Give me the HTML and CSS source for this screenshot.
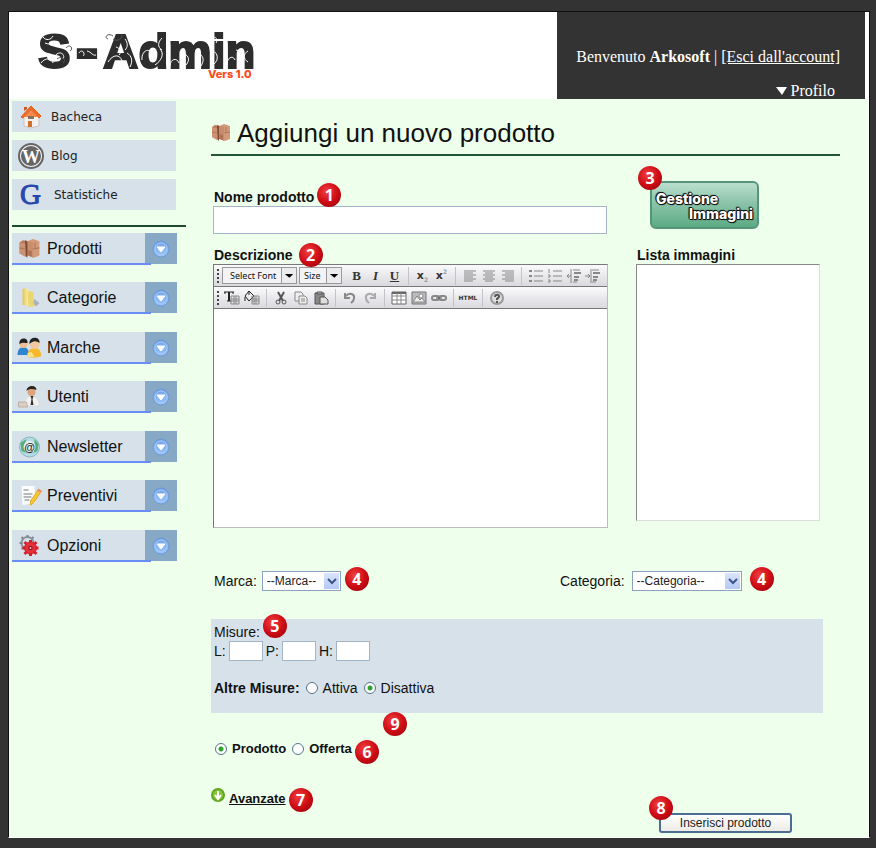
FILE: index.html
```html
<!DOCTYPE html>
<html lang="it">
<head>
  <meta charset="UTF-8" />
  <meta name="viewport" content="width=device-width, initial-scale=1.0" />
  <title>S-Admin - Aggiungi un nuovo prodotto</title>
  <link rel="stylesheet" href="styles.css">
</head>
<body>

  <svg class="sprite" aria-hidden="true">
    <defs>
      <linearGradient id="blue-ball" x1="0" y1="0" x2="0" y2="1">
        <stop offset="0" stop-color="#6f9fe4" />
        <stop offset="1" stop-color="#9cc6fb" />
      </linearGradient>
      <linearGradient id="folder-fill" x1="0" y1="0" x2="1" y2="0">
        <stop offset="0" stop-color="#e3c659" />
        <stop offset="1" stop-color="#fbf0a8" />
      </linearGradient>
      <symbol id="boxes" viewBox="0 0 20 20">
        <path d="M1 4l3-2 5 1v13l-2 1-6-3z" fill="#b97a5a" />
        <path d="M1 4l5 1v12l-5-3z" fill="#cc9273" />
        <path d="M8 3l5-2 6 2v13l-5 2-5-2z" fill="#d39a79" />
        <path d="M8 3l5 1v14l-4-2z" fill="#c68c6c" />
        <path d="M6 2l2 1v15l-1-1z" fill="#7d4a37" />
        <path d="M1 9l5 1M13 10l6-1M15 4v5" stroke="#b07658" fill="none" />
        <path d="M9 11l3 1v5l-3-1z" fill="#b0704f" />
      </symbol>
      <symbol id="arrow-ball" viewBox="0 0 18 18">
        <circle cx="9" cy="9" r="8" fill="url(#blue-ball)" stroke="#6c9ad6" />
        <circle cx="9" cy="9" r="6" fill="none" stroke="#a9cdfa" />
        <path d="M5 7h8l-4 5z" fill="#fff" stroke="#fff" stroke-linejoin="round" />
      </symbol>
    </defs>
  </svg>

  <div class="page">
    <header class="header">
      <div class="logo">
        <svg width="250" height="87" viewBox="0 0 250 87" role="img" aria-label="S-Admin Vers 1.0">
          <text class="logo-name" x="29" y="56">S<tspan class="logo-dash" x="66" y="60">-</tspan><tspan x="94" y="56">Admin</tspan></text>
          <g fill="none" stroke="#fff" stroke-width="1">
            <path d="M32 51c4-6 12-5 12 0M36 31c6 3 12-2 16 3s10 2 8-2M46 44c4-6 11-2 8 3M34 25c3 4 8 3 10-1" />
            <path d="M70 41c3-5 7 1 4 3m4-5c5 1 5 5 9 4" />
            <path d="M99 50c5-8 12-8 14-1m-6-14c4 1 6 5 3 8m8-2c5 3 6 8 3 14M116 27c3 4 3 8 0 11" />
            <path d="M133 48c-1-8 6-13 10-7m3 12c6-4 10-11 5-16m2-11c-4 4-5 9 0 12" />
            <path d="M161 54c0-7 7-9 9-3m2-10c7 1 10 6 5 12m9-15c6 3 5 9 0 13m6 3c3-5 3-9-1-12" />
            <path d="M205 52c5-4 4-11-1-13m1-14c3 1 4 3 2 6m11 22c0-8 6-10 8-5m1-10c7 1 10 7 5 14m7-13c-5 3-5 8 0 11" />
          </g>
          <g fill="none" stroke="#555" stroke-width="1">
            <path d="M57 36c4-5 8 1 4 3m-13 8c5-4 10 1 6 4M104 24c-6-4-9 2-5 3m5 0c5 3 9 0 9-4" />
          </g>
          <text class="logo-version" x="199" y="66">Vers 1.0</text>
        </svg>
      </div>
      <div class="account">
        <p>Benvenuto <strong>Arkosoft</strong> | <a href="#">[Esci dall'account]</a></p>
        <button type="button" class="profile-button">
          <svg width="11" height="8" viewBox="0 0 11 8"><path d="M0 0h11l-5 8z" fill="#fff" /></svg>
          Profilo
        </button>
      </div>
    </header>

    <div class="content">
      <nav class="sidebar">
        <ul class="quick-links">
          <li><a href="#">
            <svg width="26" height="26" viewBox="0 0 26 26">
              <path d="M6 12l7-6 8 6v10l-9 2-6-2z" fill="#f3f0ee" stroke="#c9c5c4" />
              <path d="M3 13L13 2l10 10-2 2-8-8-8 8z" fill="#ee6c2a" stroke="#e0601f" />
              <path d="M6 13l7-7 7 7z" fill="#f58a4c" />
              <path d="M6 7V3h3v2z" fill="#d4561a" />
              <path d="M10 12h6v3h-6z" fill="#8a705f" />
              <path d="M10 17h4v6h-4z" fill="#d0702e" />
            </svg>
            Bacheca</a></li>
          <li><a href="#">
            <svg width="26" height="26" viewBox="0 0 26 26">
              <circle cx="13" cy="13" r="12" fill="#eee" stroke="#666" stroke-width="2" />
              <circle cx="13" cy="13" r="10" fill="#666" />
              <text class="wp-letter" x="13" y="20">W</text>
            </svg>
            Blog</a></li>
          <li><a href="#">
            <svg width="29" height="31" viewBox="0 0 29 31">
              <text class="google-letter" x="2" y="25">G</text>
            </svg>
            Statistiche</a></li>
        </ul>

        <ul class="menu">
          <li>
            <a href="#"><svg width="22" height="22"><use href="#boxes" /></svg>Prodotti</a>
            <button type="button" aria-label="Apri Prodotti"><svg width="18" height="18"><use href="#arrow-ball" /></svg></button>
          </li>
          <li>
            <a href="#">
              <svg width="22" height="22" viewBox="0 0 22 22">
                <path d="M12 18l6 1 3-3-5-4z" fill="#a9b4bd" />
                <path d="M4 2l4-1 2 2v16l-6-1z" fill="url(#folder-fill)" />
                <path d="M9 4l6 1v11l2 3-7 1z" fill="#ecd672" />
              </svg>Categorie</a>
            <button type="button" aria-label="Apri Categorie"><svg width="18" height="18"><use href="#arrow-ball" /></svg></button>
          </li>
          <li>
            <a href="#">
              <svg width="26" height="22" viewBox="0 0 26 22">
                <path d="M1 18c0-6 3-8 6-8s5 2 6 8z" fill="#2f86d0" />
                <circle cx="7" cy="7" r="4" fill="#eebf96" />
                <path d="M3 7c-1-7 9-7 8-1-3 0-5-1-8 1z" fill="#222" />
                <path d="M11 20c0-7 3-9 7-9s6 2 7 8c-4 2-9 2-14 1z" fill="#f6b92b" />
                <path d="M11 16l4-1 3 5h-7z" fill="#fae18c" />
                <circle cx="18" cy="7" r="5" fill="#f3c89f" />
                <path d="M13 7c-1-8 11-8 10-1-3-2-6-3-10 1z" fill="#222" />
              </svg>Marche</a>
            <button type="button" aria-label="Apri Marche"><svg width="18" height="18"><use href="#arrow-ball" /></svg></button>
          </li>
          <li>
            <a href="#">
              <svg width="24" height="24" viewBox="0 0 24 24">
                <path d="M7 21c0-8 3-10 7-10s8 3 8 10z" fill="#f2f1ef" stroke="#d9dadb" />
                <path d="M13 11h3l-1 3 1 6h-3l1-6z" fill="#333" />
                <circle cx="14" cy="7" r="4" fill="#dca37c" />
                <path d="M9 6c0-6 10-7 10-1-3-1-7-2-10 1z" fill="#2b211d" />
                <path d="M1 17h8l1 5H1z" fill="#dccfc2" stroke="#bdb0a4" />
              </svg>Utenti</a>
            <button type="button" aria-label="Apri Utenti"><svg width="18" height="18"><use href="#arrow-ball" /></svg></button>
          </li>
          <li>
            <a href="#">
              <svg width="24" height="24" viewBox="0 0 24 24">
                <circle cx="12" cy="12" r="10" fill="#b5dbe2" stroke="#84b9bf" />
                <path d="M3 8l6-4-2 6 2 8-5-2zM17 4l4 5-1 7-4 2 1-8z" fill="#54ad78" />
                <circle cx="12" cy="12" r="6" fill="#eaf3f2" />
                <text class="at-sign" x="12" y="16">@</text>
              </svg>Newsletter</a>
            <button type="button" aria-label="Apri Newsletter"><svg width="18" height="18"><use href="#arrow-ball" /></svg></button>
          </li>
          <li>
            <a href="#">
              <svg width="24" height="22" viewBox="0 0 24 22">
                <path d="M4 1h13l1 17-13 2z" fill="#fbfcfc" />
                <path d="M6 5h5M6 9h9M6 12h8M7 15h5" stroke="#777" />
                <path d="M21 4l3 2-8 12-3 2 0-4z" fill="#f5c63a" stroke="#dcaa2c" />
                <path d="M21 4l3 2-1 2-3-2z" fill="#e98c6e" />
              </svg>Preventivi</a>
            <button type="button" aria-label="Apri Preventivi"><svg width="18" height="18"><use href="#arrow-ball" /></svg></button>
          </li>
          <li>
            <a href="#">
              <svg width="22" height="22" viewBox="0 0 22 22">
                <circle cx="9" cy="8" r="6" fill="none" stroke="#8e979f" stroke-width="2" />
                <path d="M9 0v3M3 2l2 2M1 8h3M3 14l2-2M15 2l-2 2" stroke="#7f8992" stroke-width="2" />
                <circle cx="12" cy="13" r="6" fill="#e3303a" stroke="#cf1c26" />
                <path d="M12 5v3M12 18v3M4 13h3M17 13h3M6 7l2 2M18 7l-2 2M6 19l2-2M18 19l-2-2" stroke="#d4222c" stroke-width="3" />
                <circle cx="12" cy="13" r="2" fill="#7d1118" />
                <circle cx="12" cy="13" r="1" fill="#f1c4c4" />
              </svg>Opzioni</a>
            <button type="button" aria-label="Apri Opzioni"><svg width="18" height="18"><use href="#arrow-ball" /></svg></button>
          </li>
        </ul>
      </nav>

      <main class="main">
        <h1><svg width="20" height="20"><use href="#boxes" /></svg>Aggiungi un nuovo prodotto</h1>

        <form>
          <div class="product-grid">
            <div class="field name-field">
              <label for="nome">Nome prodotto<span class="badge badge-1">1</span></label>
              <input type="text" id="nome">
            </div>
            <div class="images-button-cell">
              <button type="button" class="images-button"><span>Gestione</span><span>Immagini</span></button>
              <span class="badge badge-corner">3</span>
            </div>

            <div class="field">
              <label for="descrizione">Descrizione<span class="badge badge-2">2</span></label>
              <div class="editor">
                <div class="toolbar">
                  <span class="handle"></span>
                  <span class="tool-select font-select">
                    <select aria-label="Font"><option>Select Font</option></select>
                    <svg width="15" height="15" viewBox="0 0 15 15"><path d="M3 6h9l-4 4z" fill="#000" /></svg>
                  </span>
                  <span class="tool-select size-select">
                    <select aria-label="Size"><option>Size</option></select>
                    <svg width="15" height="15" viewBox="0 0 15 15"><path d="M3 6h9l-4 4z" fill="#000" /></svg>
                  </span>
                  <button type="button"><b>B</b></button>
                  <button type="button"><b><i>I</i></b></button>
                  <button type="button"><b><u>U</u></b></button>
                  <span class="separator"></span>
                  <button type="button" class="script-button">x<sub>2</sub></button>
                  <button type="button" class="script-button">x<sup>2</sup></button>
                  <span class="separator"></span>
                  <button type="button" aria-label="Allinea a sinistra"><svg viewBox="0 0 16 16"><path d="M2 3h12M2 5h9M2 7h12M2 9h9M2 11h12M2 13h9" /></svg></button>
                  <button type="button" aria-label="Centra"><svg viewBox="0 0 16 16"><path d="M2 3h12M4 5h8M2 7h12M4 9h8M2 11h12M4 13h8" /></svg></button>
                  <button type="button" aria-label="Allinea a destra"><svg viewBox="0 0 16 16"><path d="M2 3h12M5 5h9M2 7h12M5 9h9M2 11h12M5 13h9" /></svg></button>
                  <span class="separator"></span>
                  <button type="button" aria-label="Elenco puntato"><svg viewBox="0 0 16 16"><path d="M1 3h3M1 8h3M1 13h3" stroke-width="2" /><path d="M6 3h9M6 8h9M6 13h9" /></svg></button>
                  <button type="button" aria-label="Elenco numerato"><svg viewBox="0 0 16 16"><path d="M2 1v4M1 7h2v2H1M1 12h2v2H1" /><path d="M6 3h9M6 8h9M6 13h9" /></svg></button>
                  <button type="button" aria-label="Riduci rientro"><svg viewBox="0 0 16 16"><path d="M7 2h7M7 14h4M5 1v14M5 8H1l2-2M1 8l2 2" /><path d="M8 5h7M8 9h5M8 12h4" stroke-width="2" /></svg></button>
                  <button type="button" aria-label="Aumenta rientro"><svg viewBox="0 0 16 16"><path d="M7 2h7M7 14h4M6 1v14M0 8h5L3 6M5 8l-2 2" /><path d="M8 5h7M8 9h5M8 12h4" stroke-width="2" /></svg></button>
                </div>
                <div class="toolbar toolbar-wide">
                  <span class="handle"></span>
                  <button type="button" aria-label="Formato tabella"><svg viewBox="0 0 16 16"><path d="M0 2h10M5 2v9M3 11h4M1 2v2M9 2v2" stroke="#222" /><path d="M5 2v9" stroke="#222" stroke-width="2" /><path d="M7 6h8v8H7zM7 9h8M7 11h8M10 6v8M12 6v8" /></svg></button>
                  <button type="button" aria-label="Colore tabella"><svg viewBox="0 0 16 16"><path d="M5 1l5 5-5 5-4-5zM5 1v4M1 7v4" stroke="#222" /><path d="M8 6h7v8H8zM8 9h7M8 11h7M10 6v8M12 6v8" /></svg></button>
                  <span class="separator"></span>
                  <button type="button" aria-label="Taglia"><svg viewBox="0 0 16 16"><path d="M5 2l5 9M11 2l-5 9" stroke="#555" stroke-width="2" /><circle cx="5" cy="12" r="2" stroke="#555" /><circle cx="11" cy="12" r="2" stroke="#555" /></svg></button>
                  <button type="button" aria-label="Copia"><svg viewBox="0 0 16 16"><path d="M2 2h6l2 2v7H2z" fill="#eee" /><path d="M6 6h6l2 2v6H6z" fill="#eee" /><path d="M8 9h4M8 11h4" /></svg></button>
                  <button type="button" aria-label="Incolla"><svg viewBox="0 0 16 16"><path d="M2 3h9v11H2z" fill="#888" stroke="#555" /><path d="M4 2h5v2H4z" fill="#bbb" stroke="#555" /><path d="M7 7h5l3 3v4H7z" fill="#ddd" stroke="#555" /></svg></button>
                  <span class="separator"></span>
                  <button type="button" aria-label="Annulla"><svg viewBox="0 0 16 16"><path d="M4 6c3-4 9-2 8 2 0 3-2 4-3 5M3 3v5h5" stroke-width="2" /></svg></button>
                  <button type="button" aria-label="Ripeti"><svg viewBox="0 0 16 16"><path d="M12 6c-3-4-9-2-8 2 0 3 2 4 3 5M13 3v5H8" stroke="#aaa" stroke-width="2" /></svg></button>
                  <span class="separator"></span>
                  <button type="button" aria-label="Tabella"><svg viewBox="0 0 16 16"><path d="M1 2h14v12H1z" fill="#fff" stroke="#666" /><path d="M1 3h14" stroke="#666" stroke-width="2" /><path d="M1 6h14M1 10h14M6 3v11M10 3v11" /></svg></button>
                  <button type="button" aria-label="Immagine"><svg viewBox="0 0 16 16"><path d="M1 2h14v12H1z" fill="#bbb" stroke="#777" /><path d="M2 12l4-6 3 4 2-2 3 4z" fill="#eee" /><circle cx="10" cy="6" r="2" fill="#fff" /></svg></button>
                  <button type="button" aria-label="Collegamento"><svg viewBox="0 0 16 16"><rect x="1" y="6" width="7" height="4" rx="2" stroke-width="2" /><rect x="8" y="6" width="7" height="4" rx="2" stroke-width="2" /><path d="M5 8h6" stroke="#555" /></svg></button>
                  <span class="separator"></span>
                  <button type="button" class="html-button">HTML</button>
                  <span class="separator"></span>
                  <button type="button" aria-label="Aiuto"><svg viewBox="0 0 16 16"><circle cx="8" cy="8" r="6" fill="#ddd" stroke="#999" stroke-width="2" /><path d="M6 7c0-3 5-3 4 0l-2 2v1M8 11v2" stroke="#555" stroke-width="2" /></svg></button>
                </div>
                <textarea id="descrizione"></textarea>
              </div>
            </div>
            <div class="field">
              <label for="immagini">Lista immagini</label>
              <select id="immagini" class="image-list" multiple></select>
            </div>
          </div>

          <div class="choice-row">
            <div class="choice">
              <label for="marca">Marca:</label>
              <span class="drop-down brand-select">
                <select id="marca"><option>--Marca--</option></select>
                <svg width="15" height="16" viewBox="0 0 15 16"><path d="M4 6l4 4 4-4" fill="none" stroke="#3d5486" stroke-width="2" /></svg>
                <span class="badge badge-4">4</span>
              </span>
            </div>
            <div class="choice">
              <label for="categoria">Categoria:</label>
              <span class="drop-down category-select">
                <select id="categoria"><option>--Categoria--</option></select>
                <svg width="15" height="16" viewBox="0 0 15 16"><path d="M4 6l4 4 4-4" fill="none" stroke="#3d5486" stroke-width="2" /></svg>
                <span class="badge badge-4b">4</span>
              </span>
            </div>
          </div>

          <div class="measures">
            <p><span class="anchor">Misure:<span class="badge badge-5">5</span></span></p>
            <div class="sizes">
              <label for="l">L:</label><input type="text" id="l">
              <label for="p">P:</label><input type="text" id="p">
              <label for="h">H:</label><input type="text" id="h">
            </div>
            <div class="radio-row other-measures">
              <strong>Altre Misure:</strong>
              <label><input type="radio" name="altre">Attiva</label>
              <label><input type="radio" name="altre" checked>Disattiva</label>
            </div>
          </div>

          <div class="radio-row type-row">
            <label><input type="radio" name="tipo" checked>Prodotto</label>
            <label><input type="radio" name="tipo">Offerta</label>
            <span class="badge badge-6">6</span>
            <span class="badge badge-9">9</span>
          </div>

          <div class="advanced">
            <svg width="15" height="15" viewBox="0 0 15 15">
              <circle cx="7" cy="7" r="7" fill="#62a81e" />
              <circle cx="7" cy="7" r="5" fill="#86c63d" />
              <path d="M7 3v7M4 7l3 4 3-4" fill="none" stroke="#fff" stroke-width="2" />
            </svg>
            <a href="#">Avanzate<span class="badge badge-7">7</span></a>
          </div>

          <div class="actions">
            <span class="anchor">
              <button type="submit">Inserisci prodotto</button>
              <span class="badge badge-8">8</span>
            </span>
          </div>
        </form>
      </main>
    </div>
  </div>

</body>
</html>
```

FILE: styles.css
```css
:root {
  --dark: #333;
  --green-bg: #eeffeb;
  --panel: #d6e1ea;
  --panel-dark: #87a9c5;
  --line: #225539;
  --input-border: #a3b5c7;
}

* {
  box-sizing: border-box;
}

body {
  margin: 0;
  padding: 11px 6px 10px 8px;
  background: var(--dark);
  color: #111;
  font-family: "Liberation Sans", Arial, sans-serif;
  font-size: 14px;
  line-height: 18px;
}

h1, p, ul {
  margin: 0;
  padding: 0;
}

ul {
  list-style: none;
}

.sprite {
  position: absolute;
  width: 0;
  height: 0;
}

.page {
  background: var(--green-bg);
  border: 1px solid #111;
  border-bottom-color: #fff;
  box-shadow: inset -1px 0 #fff;
}

/* header */
.header {
  display: flex;
  justify-content: space-between;
  background: #fff;
  padding-right: 4px;
}

.logo svg {
  display: block;
}

.logo-name {
  font: bold 49px "Liberation Sans", Arial, sans-serif;
  fill: #2d2d2d;
  stroke: #2d2d2d;
  stroke-width: 2px;
}

.logo-dash {
  font-size: 72px;
}

.logo-version {
  font: 800 11px Inter, sans-serif;
  fill: #fb4a20;
}

.account {
  display: flex;
  flex-direction: column;
  align-items: flex-end;
  gap: 16px;
  width: 308px;
  height: 87px;
  padding: 36px 25px 0 0;
  background: var(--dark);
  color: #fff;
  font: 16px/18px "Liberation Serif", "Times New Roman", serif;
}

.account a {
  color: #fff;
}

.profile-button {
  display: flex;
  align-items: center;
  gap: 4px;
  margin-right: 5px;
  padding: 0;
  border: 0;
  background: none;
  color: #fff;
  font: inherit;
}

/* sidebar */
.content {
  display: flex;
}

.sidebar {
  width: 177px;
  flex: none;
  padding: 2px 0 0 3px;
}

.quick-links {
  display: grid;
  gap: 8px;
  padding-bottom: 15px;
  border-bottom: 2px solid #1d4a30;
}

.quick-links a {
  display: flex;
  align-items: center;
  gap: 7px;
  width: 164px;
  height: 31px;
  padding-left: 6px;
  background: var(--panel);
  color: #222;
  font: 12px "DejaVu Sans", Verdana, sans-serif;
  text-decoration: none;
}

.wp-letter {
  font: bold 18px "Liberation Serif", serif;
  fill: #fff;
  text-anchor: middle;
}

.google-letter {
  font: 29px "Liberation Serif", serif;
  fill: #2747b0;
  stroke: #2747b0;
}

.at-sign {
  font: bold 11px "Liberation Sans", Arial, sans-serif;
  fill: #222;
  text-anchor: middle;
}

.menu {
  padding-top: 6px;
}

.menu li {
  display: flex;
  width: 165px;
  height: 31px;
  margin-bottom: 18px;
}

.menu li:nth-child(even) {
  margin-bottom: 19px;
}

.menu a {
  position: relative;
  display: flex;
  flex: 1;
  align-items: center;
  padding-left: 35px;
  background: var(--panel);
  color: #111;
  font-size: 16px;
  text-decoration: none;
}

/* blue line, a little longer than the label */
.menu a::after {
  content: "";
  position: absolute;
  left: 0;
  right: -6px;
  bottom: -1px;
  height: 2px;
  background: #6a8cf5;
}

.menu a svg {
  width: 35px;
  margin-left: -35px;
}

.menu button {
  display: grid;
  place-items: center;
  width: 32px;
  padding: 0;
  border: 0;
  background: var(--panel-dark);
}

/* main column */
.main {
  flex: 1;
  min-width: 0;
  padding: 17px 29px 4px 25px;
}

h1 {
  display: flex;
  align-items: center;
  gap: 6px;
  height: 40px;
  padding-bottom: 5px;
  border-bottom: 2px solid var(--line);
  font-size: 26px;
  font-weight: normal;
}

.product-grid {
  display: grid;
  grid-template-columns: minmax(0, 1fr) 204px;
  gap: 12px 28px;
  padding: 25px 0 0 2px;
}

.field label {
  position: relative;
  display: table;
  margin-left: 1px;
  font-weight: bold;
}

.name-field {
  padding-top: 7px;
}

input[type="text"] {
  display: block;
  border: 1px solid var(--input-border);
  background: #fff;
}

.name-field input {
  width: calc(100% - 1px);
  height: 28px;
}

.images-button-cell,
.anchor {
  position: relative;
}

.images-button {
  display: flex;
  flex-direction: column;
  width: 109px;
  height: 48px;
  margin-left: 14px;
  padding: 8px 4px;
  border: 2px solid #55967a;
  border-radius: 6px;
  background: linear-gradient(#badfcf, #8cc4a9 45%, #5cab84);
  color: #fff;
  font: 800 14px/15px Inter, sans-serif;
  text-shadow: 1px 0 #111, -1px 0 #111, 0 1px #111, 0 -1px #111, 1px 1px 1px #111, -1px -1px 1px #111;
}

.images-button span:first-child {
  align-self: flex-start;
}

.images-button span:last-child {
  align-self: flex-end;
}

/* text editor */
.editor {
  border: 1px solid #777;
  border-right-color: #bbb;
  border-bottom-color: #bbb;
  background: #fff;
}

.toolbar {
  display: flex;
  align-items: center;
  height: 22px;
  border-bottom: 1px solid #777;
  background: linear-gradient(#fafafb, #d9d9df);
}

.toolbar button {
  display: grid;
  place-items: center;
  flex: none;
  width: 19px;
  height: 20px;
  padding: 0;
  border: 0;
  background: none;
  color: #333;
  font: 13px "Liberation Serif", serif;
}

.toolbar-wide button {
  width: 20px;
}

.toolbar button svg {
  width: 16px;
  height: 16px;
  fill: none;
  stroke: #888;
}

.toolbar .script-button {
  display: block;
  font: bold 11px "DejaVu Sans", sans-serif;
}

.script-button sub,
.script-button sup {
  color: #999;
  font-size: 6px;
  line-height: 0;
}

.toolbar .html-button {
  font: bold 6px "DejaVu Sans", sans-serif;
}

.handle {
  width: 2px;
  height: 14px;
  margin: 0 3px;
  background: repeating-linear-gradient(#444 0 2px, transparent 2px 4px);
}

.separator {
  flex: none;
  width: 1px;
  height: 18px;
  margin: 0 4px;
  background: #c2c2c8;
}

.tool-select {
  position: relative;
  height: 17px;
  margin-right: 2px;
  border: 1px solid #999;
}

.tool-select select {
  display: block;
  width: 100%;
  height: 15px;
  padding: 0 7px;
  border: 0;
  border-radius: 0;
  appearance: none;
  background: #f3f3f5;
  color: #111;
  font: 9px "Noto Sans", Tahoma, sans-serif;
}

.tool-select svg {
  position: absolute;
  top: 0;
  right: 0;
  border-left: 1px solid #999;
  background: #ececef;
  pointer-events: none;
}

.font-select {
  width: 75px;
}

.size-select {
  width: 43px;
  margin-right: 5px;
}

.size-select select {
  padding: 0 4px;
}

.editor textarea {
  display: block;
  width: 100%;
  height: 218px;
  border: 0;
  resize: none;
}

.image-list {
  display: block;
  width: 184px;
  height: 257px;
  border: 1px solid #888;
  border-right-color: #ddd;
  border-bottom-color: #ddd;
  border-radius: 0;
  background: #fff;
}

/* brand and category */
.choice-row {
  display: grid;
  grid-template-columns: 1fr 280px;
  padding: 43px 0 28px;
}

.choice {
  display: flex;
  align-items: center;
  gap: 7px;
}

.choice:first-child {
  gap: 5px;
  padding-left: 3px;
}

.drop-down {
  position: relative;
}

.drop-down select {
  display: block;
  width: 100%;
  height: 20px;
  padding: 0 4px;
  border: 1px solid #8aa2bf;
  border-radius: 0;
  appearance: none;
  background: #fff;
  color: #222;
  font: 12px "Liberation Sans", Arial, sans-serif;
}

.drop-down svg {
  position: absolute;
  top: 2px;
  right: 2px;
  background: linear-gradient(#dbe5fb, #b4c8f4);
  pointer-events: none;
}

.brand-select {
  width: 79px;
}

.category-select {
  width: 110px;
}

/* measures */
.measures {
  margin-right: 17px;
  padding: 4px 3px 16px;
  background: var(--panel);
}

.sizes {
  display: flex;
  align-items: center;
  gap: 3px;
}

.sizes input {
  width: 34px;
  height: 20px;
}

.radio-row {
  position: relative;
  display: flex;
  align-items: center;
  gap: 6px;
}

.radio-row label {
  display: flex;
  align-items: center;
  gap: 5px;
}

.radio-row input {
  width: 12px;
  height: 12px;
  margin: 0;
  border: 1px solid #55758f;
  border-radius: 50%;
  appearance: none;
  background: #fff;
}

.radio-row input:checked {
  background: radial-gradient(circle, #2ca32c 2px, #fff 3px);
}

.other-measures {
  padding-top: 18px;
}

.type-row {
  padding: 27px 0 0 4px;
  font-size: 13px;
  font-weight: bold;
}

.advanced {
  display: flex;
  gap: 3px;
  padding-top: 32px;
}

.advanced svg {
  margin-top: -2px;
}

.advanced a {
  position: relative;
  color: #111;
  font-size: 13px;
  font-weight: bold;
}

.actions {
  display: flex;
  justify-content: flex-end;
  padding: 5px 48px 0 0;
}

.actions button {
  display: block;
  width: 133px;
  height: 20px;
  padding: 0;
  border: 2px solid #4b6d91;
  border-radius: 3px;
  background: linear-gradient(#fff, #ecebe5);
  color: #222;
  font: 12px "Liberation Sans", Arial, sans-serif;
}

/* numbered markers that lie over the form */
.badge {
  position: absolute;
  left: 100%;
  width: 24px;
  height: 24px;
  border-radius: 50%;
  background: radial-gradient(circle at 40% 35%, #f04040, #cf0d16 50%, #8e0008);
  color: #fff;
  font: bold 16px/24px "Open Sans", sans-serif;
  text-align: center;
}

.badge-1 {
  top: -5px;
  margin-left: 3px;
}

.badge-2 {
  top: -3px;
  margin-left: 6px;
}

.badge-corner {
  top: -15px;
  left: 2px;
}

.badge-4 {
  top: -4px;
  margin-left: 4px;
}

.badge-4b {
  top: -4px;
  margin-left: 8px;
}

.badge-5 {
  top: -10px;
  margin-left: 3px;
}

.badge-6 {
  top: 27px;
  left: 144px;
}

.badge-7 {
  top: -2px;
  margin-left: 3px;
}

.badge-8 {
  top: -17px;
  left: -10px;
}

.badge-9 {
  top: -1px;
  left: 172px;
}
```
